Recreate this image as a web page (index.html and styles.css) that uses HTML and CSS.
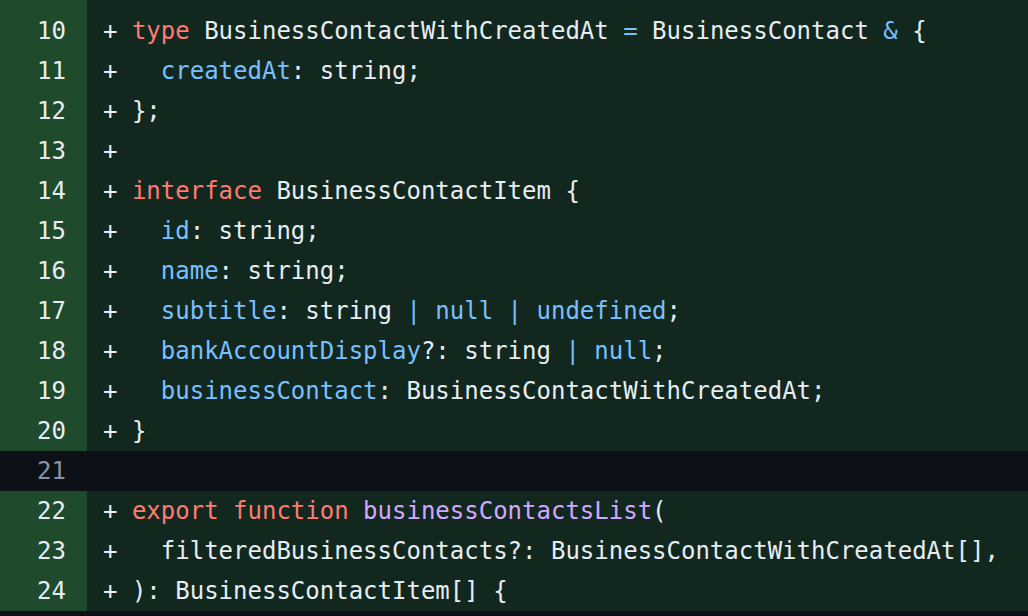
FILE: index.html
```html
<!DOCTYPE html>
<html>
<head>
<meta charset="utf-8">
<link rel="stylesheet" href="styles.css">
</head>
<body>
<div class="diff">
  <div class="row add spacer"><div class="num"></div><div class="code"></div></div>
  <div class="row add"><div class="num">10</div><div class="code"><span class="p">+</span> <span class="k">type</span> BusinessContactWithCreatedAt <span class="o">=</span> BusinessContact <span class="o">&amp;</span> {</div></div>
  <div class="row add"><div class="num">11</div><div class="code"><span class="p">+</span>   <span class="v">createdAt</span>: string;</div></div>
  <div class="row add"><div class="num">12</div><div class="code"><span class="p">+</span> };</div></div>
  <div class="row add"><div class="num">13</div><div class="code"><span class="p">+</span></div></div>
  <div class="row add"><div class="num">14</div><div class="code"><span class="p">+</span> <span class="k">interface</span> BusinessContactItem {</div></div>
  <div class="row add"><div class="num">15</div><div class="code"><span class="p">+</span>   <span class="v">id</span>: string;</div></div>
  <div class="row add"><div class="num">16</div><div class="code"><span class="p">+</span>   <span class="v">name</span>: string;</div></div>
  <div class="row add"><div class="num">17</div><div class="code"><span class="p">+</span>   <span class="v">subtitle</span>: string <span class="o">|</span> <span class="v">null</span> <span class="o">|</span> <span class="v">undefined</span>;</div></div>
  <div class="row add"><div class="num">18</div><div class="code"><span class="p">+</span>   <span class="v">bankAccountDisplay</span>?: string <span class="o">|</span> <span class="v">null</span>;</div></div>
  <div class="row add"><div class="num">19</div><div class="code"><span class="p">+</span>   <span class="v">businessContact</span>: BusinessContactWithCreatedAt;</div></div>
  <div class="row add"><div class="num">20</div><div class="code"><span class="p">+</span> }</div></div>
  <div class="row ctx"><div class="num">21</div><div class="code"></div></div>
  <div class="row add"><div class="num">22</div><div class="code"><span class="p">+</span> <span class="k">export</span> <span class="k">function</span> <span class="f">businessContactsList</span>(</div></div>
  <div class="row add"><div class="num">23</div><div class="code"><span class="p">+</span>   filteredBusinessContacts?: BusinessContactWithCreatedAt[],</div></div>
  <div class="row add"><div class="num">24</div><div class="code"><span class="p">+</span> ): BusinessContactItem[] {</div></div>
</div>
</body>
</html>
```

FILE: styles.css
```css
html, body {
  margin: 0;
  padding: 0;
  background: #0d1117;
  width: 1028px;
  height: 616px;
  overflow: hidden;
}

.diff {
  display: flex;
  flex-direction: column;
  font-family: "DejaVu Sans Mono", "Liberation Mono", monospace;
  font-size: 24px;
  color: #e6edf3;
}

.row {
  display: flex;
  height: 40px;
  line-height: 40px;
}

.row.spacer {
  height: 11px;
}

.num {
  width: 87px;
  box-sizing: border-box;
  padding-right: 21px;
  text-align: right;
  flex: none;
}

.code {
  flex: 1;
  padding-left: 16px;
  white-space: pre;
}

.add .num {
  background: #1f4a2b;
  color: #e6edf3;
}

.add .code {
  background: #12281f;
}

.ctx .num {
  background: #0d1117;
  color: #8b949e;
}

.ctx .code {
  background: #0d1117;
}

.p { color: #e6edf3; }
.k { color: #ff7b72; }
.v { color: #79c0ff; }
.o { color: #79c0ff; }
.f { color: #d2a8ff; }
```
